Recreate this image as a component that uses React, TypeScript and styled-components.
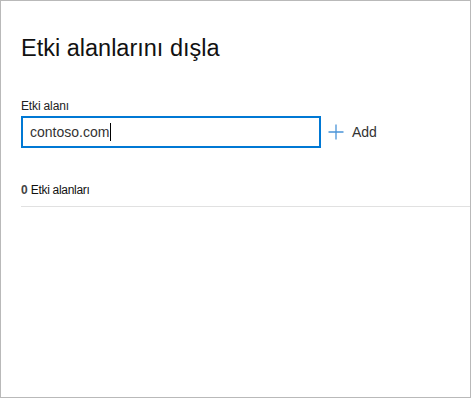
import React from "react";
import styled, { createGlobalStyle } from "styled-components";

const GlobalStyle = createGlobalStyle`
  html, body {
    margin: 0;
    padding: 0;
    background: #ffffff;
  }
  body {
    font-family: "Liberation Sans", Arial, sans-serif;
  }
`;

const Panel = styled.div`
  box-sizing: border-box;
  width: 471px;
  height: 398px;
  border: 1px solid #b9b9b9;
  background: #ffffff;
  padding: 31px 0 0 20px;
  display: flex;
  flex-direction: column;
`;

const Title = styled.h1`
  margin: 0;
  font-size: 23.5px;
  font-weight: 400;
  color: #111111;
  line-height: 32px;
`;

const FieldLabel = styled.label`
  margin-top: 34px;
  font-size: 12px;
  color: #222222;
  line-height: 16px;
  letter-spacing: -0.15px;
`;

const InputRow = styled.div`
  display: flex;
  align-items: center;
  margin-top: 2px;
  gap: 7px;
`;

const TextInput = styled.div`
  box-sizing: border-box;
  width: 300px;
  height: 32px;
  border: 2px solid #0078d4;
  padding: 0 7px;
  display: flex;
  align-items: center;
  font-size: 14px;
  color: #333333;
`;

const Caret = styled.span`
  display: inline-block;
  width: 1px;
  height: 18px;
  background: #000000;
  margin-left: 1px;
`;

const AddButton = styled.button`
  display: flex;
  align-items: center;
  gap: 8px;
  border: none;
  background: transparent;
  padding: 0;
  font-family: inherit;
  font-size: 14px;
  color: #333333;
  cursor: pointer;
`;

const CountRow = styled.div`
  margin-top: 34px;
  display: flex;
  align-items: baseline;
  gap: 3px;
  font-size: 12px;
  line-height: 16px;
  padding-bottom: 8px;
  border-bottom: 1px solid #e1e1e1;
`;

const Count = styled.span`
  color: #444444;
  font-weight: 700;
`;

const CountLabel = styled.span`
  color: #111111;
  letter-spacing: -0.3px;
`;

const PlusIcon = () => (
  <svg width="16" height="16" viewBox="0 0 16 16" fill="none">
    <path d="M8 0.5V15.5M0.5 8H15.5" stroke="#4a94d8" strokeWidth="1.3" />
  </svg>
);

export default function App() {
  return (
    <>
      <GlobalStyle />
      <Panel>
        <Title>Etki alanlarını dışla</Title>
        <FieldLabel>Etki alanı</FieldLabel>
        <InputRow>
          <TextInput>
            contoso.com
            <Caret />
          </TextInput>
          <AddButton>
            <PlusIcon />
            Add
          </AddButton>
        </InputRow>
        <CountRow>
          <Count>0</Count>
          <CountLabel>Etki alanları</CountLabel>
        </CountRow>
      </Panel>
    </>
  );
}
